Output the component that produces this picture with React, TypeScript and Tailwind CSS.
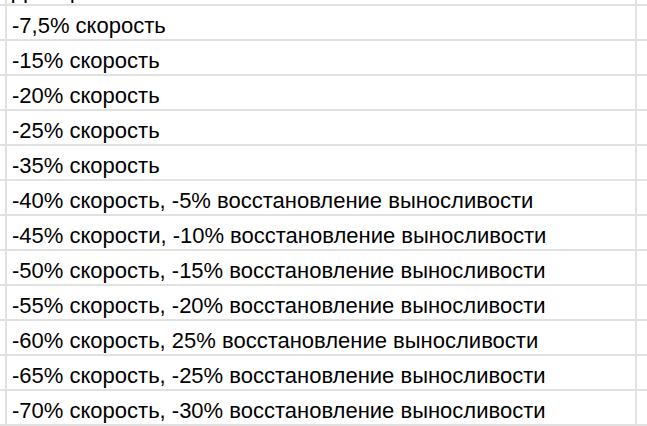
import React from "react";

const rows = [
  "-7,5% скорость",
  "-15% скорость",
  "-20% скорость",
  "-25% скорость",
  "-35% скорость",
  "-40% скорость, -5% восстановление выносливости",
  "-45% скорости, -10% восстановление выносливости",
  "-50% скорость, -15% восстановление выносливости",
  "-55% скорость, -20% восстановление выносливости",
  "-60% скорость, 25% восстановление выносливости",
  "-65% скорость, -25% восстановление выносливости",
  "-70% скорость, -30% восстановление выносливости",
];

function Row({ text, className = "" }: { text: string; className?: string }) {
  return (
    <div className={`flex h-[35px] shrink-0 border-b-2 border-[#e1e1e1] ${className}`}>
      <div className="w-[7px] shrink-0 border-r-2 border-[#e1e1e1]" />
      <div className="flex w-[630px] shrink-0 items-end overflow-hidden whitespace-nowrap border-r-2 border-[#e1e1e1] pb-[2px] pl-[5px] text-[22px] leading-[23px] text-black">
        {text}
      </div>
      <div className="flex-1" />
    </div>
  );
}

export default function App() {
  return (
    <div
      className="flex h-[426px] w-[647px] flex-col overflow-hidden bg-white"
      style={{ fontFamily: '"Liberation Sans", Arial, sans-serif' }}
    >
      <Row text="Дебафы" className="mt-[-29px]" />
      {rows.map((t) => (
        <Row key={t} text={t} />
      ))}
    </div>
  );
}
